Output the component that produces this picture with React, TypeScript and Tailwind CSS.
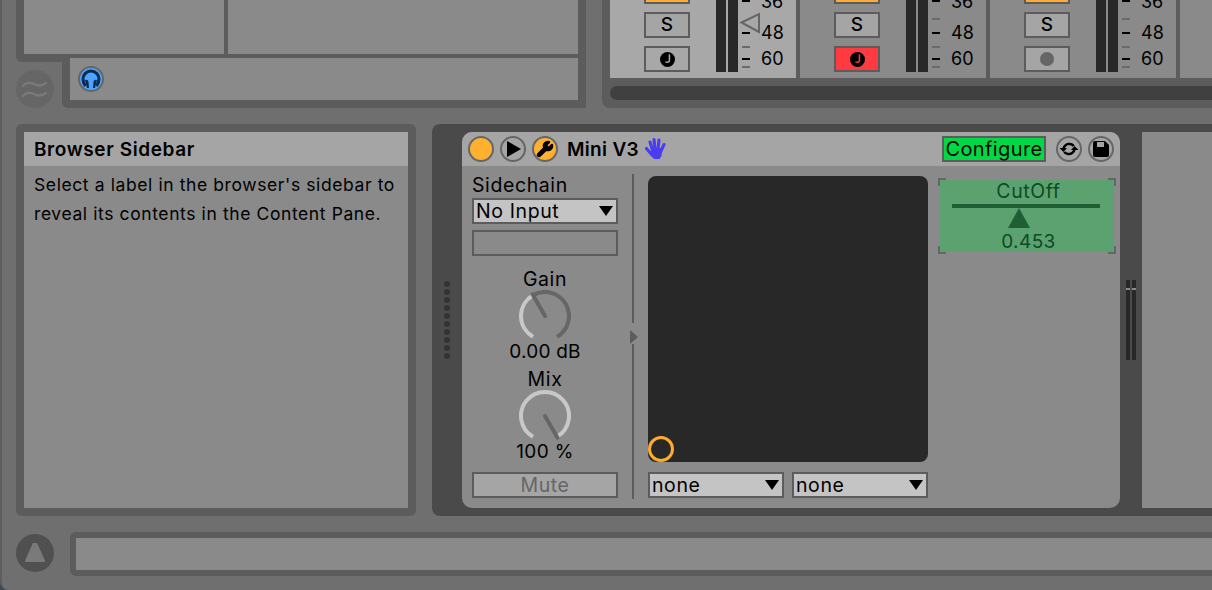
import React from 'react';
import { Wrench } from 'lucide-react';

const polar = (cx: number, cy: number, r: number, deg: number) => {
  const a = ((deg - 90) * Math.PI) / 180;
  return [cx + r * Math.cos(a), cy + r * Math.sin(a)];
};

const arc = (from: number, to: number) => {
  const [x1, y1] = polar(26, 26, 24, from);
  const [x2, y2] = polar(26, 26, 24, to);
  return `M${x1} ${y1} A24 24 0 ${to - from > 180 ? 1 : 0} 1 ${x2} ${y2}`;
};

const Knob: React.FC<{ angle: number }> = ({ angle }) => {
  const [px, py] = polar(26, 26, 25, angle);
  return (
    <svg width="52" height="52" viewBox="0 0 52 52" className="block">
      <path d={arc(angle, 150)} fill="none" stroke="#666666" strokeWidth="4" />
      <path d={arc(-150, angle)} fill="none" stroke="#c8c8c8" strokeWidth="4" />
      <line x1="26" y1="26" x2={px} y2={py} stroke="#666666" strokeWidth="4" strokeLinecap="round" />
    </svg>
  );
};

const DownTri = () => (
  <svg width="14" height="10" viewBox="0 0 14 10" className="block">
    <path d="M0 0H14L7 10Z" fill="#000" />
  </svg>
);

const Select: React.FC<{ label: string; width: string }> = ({ label, width }) => (
  <div className={`${width} h-[26px] border-2 border-[#5c5c5c] bg-[#c4c4c4] flex items-center justify-between pl-[2px] pr-[3px] text-[19.5px] tracking-[0.6px] leading-none text-black`}>
    <span className="pt-[2px]">{label}</span>
    <DownTri />
  </div>
);

const NoteGlyph: React.FC<{ cut: string }> = ({ cut }) => (
  <svg width="15" height="15" viewBox="0 0 14 14" className="block">
    <circle cx="7" cy="7" r="7" fill="#000" />
    <path d="M8.800 2V8.200C8.800 9.400 7 9.800 5 9.200" fill="none" stroke={cut} strokeWidth="1.400" />
  </svg>
);

const ToggleBox: React.FC<{ className: string; children: React.ReactNode }> = ({ className, children }) => (
  <div className={`w-[46px] h-[26px] border-2 border-[#5c5c5c] flex items-center justify-center ${className}`}>{children}</div>
);

const Tick: React.FC<{ gray?: boolean; className: string }> = ({ gray, className }) => (
  <div className={`w-[8px] h-[2px] ${gray ? 'bg-[#6a6a6a]' : 'bg-black'} ${className}`} />
);

const Channel: React.FC<{ bg: string; arm: React.ReactNode; hideTick?: boolean; children?: React.ReactNode }> = ({ bg, arm, hideTick, children }) => (
  <div className={`relative w-[186px] h-[78px] overflow-hidden flex shrink-0 pl-[34px] ${bg}`}>
    <div className="flex flex-col">
      <div className="w-[46px] h-[4px] bg-[#ffab2e] border-b-2 border-x-2 border-[#5c5c5c]" />
      <ToggleBox className="mt-[8px] bg-[#a5a5a5] text-[19px] font-medium text-black">S</ToggleBox>
      <div className="mt-[8px]">{arm}</div>
    </div>
    <div className="ml-[26px] flex gap-[2px] h-[72px]">
      <div className="w-[10px] bg-[#282828]" />
      <div className="w-[10px] bg-[#282828]" />
    </div>
    <div className="ml-[4px] flex flex-col">
      <Tick className="" />
      <Tick gray className={`mt-[16px] ${hideTick ? 'opacity-0' : ''}`} />
      <Tick className="mt-[12px]" />
      <Tick gray className="mt-[12px]" />
      <Tick className="mt-[10px]" />
      <Tick gray className="mt-[6px]" />
    </div>
    <div className="ml-[11px] flex flex-col text-[18px] leading-[26px] text-black">
      <span className="-mt-[11px]">36</span>
      <span className="mt-[5px]">48</span>
      <span>60</span>
    </div>
    {children}
  </div>
);

const RoundBtn: React.FC<{ className?: string; children?: React.ReactNode }> = ({ className, children }) => (
  <div className={`w-[26px] h-[26px] rounded-full border-2 border-[#666666] flex items-center justify-center shrink-0 ${className ?? ''}`}>{children}</div>
);

const Corner: React.FC<{ className: string }> = ({ className }) => (
  <div className={`absolute w-[8px] h-[8px] border-[#666666] ${className}`} />
);

export default function App() {
  return (
    <div className="w-[1212px] h-[590px] bg-[#3d4651] overflow-hidden [font-family:Inter,sans-serif]">
      <div className="w-full h-full bg-[#6f6f6f] border-l-2 border-[#5e5e5e] rounded-bl-[8px] pl-[14px] flex flex-col">
        {/* top: clip view + mixer */}
        <div className="flex gap-[16px] h-[108px] shrink-0">
          <div className="w-[570px] flex flex-col">
            <div className="h-[62px] shrink-0 bg-[#5c5c5c] rounded-bl-[6px] px-[8px] flex gap-[4px]">
              <div className="w-[200px] h-[54px] bg-[#8a8a8a]" />
              <div className="flex-1 h-[54px] bg-[#8a8a8a]" />
            </div>
            <div className="flex -mt-[4px]">
              <div className="w-[46px] pt-[12px] shrink-0">
                <div className="w-[38px] h-[38px] rounded-full bg-[#666666] flex items-center justify-center">
                  <svg width="28" height="22" viewBox="0 0 28 22" fill="none" stroke="#797979" strokeWidth="2.500" strokeLinecap="round">
                    <path d="M2 8c3-4 7-4 11-2s8 2 12-1" />
                    <path d="M2 18c3-4 7-4 11-2s8 2 12-1" />
                  </svg>
                </div>
              </div>
              <div className="flex-1 h-[50px] bg-[#5c5c5c] rounded-bl-[6px] pl-[8px] pr-[8px] pb-[8px]">
                <div className="h-[42px] bg-[#8a8a8a] pl-[8px] pt-[8px]">
                  <RoundBtn className="bg-[#4da3ff]">
                    <svg width="22" height="22" viewBox="0 0 22 22" fill="none">
                      <path d="M5.500 18C3.500 15.500 3 13.500 3 11a8 8 0 0 1 16 0c0 2.500-.5 4.500-2.500 7" stroke="#0d2a4d" strokeWidth="3" />
                      <path d="M5 12a2.500 2.500 0 0 1 3.500 2L9 20H7ZM17 12a2.500 2.500 0 0 0-3.500 2L13 20h2Z" fill="#0d2a4d" />
                    </svg>
                  </RoundBtn>
                </div>
              </div>
            </div>
          </div>

          <div className="flex-1 min-w-0 bg-[#5c5c5c] rounded-bl-[8px] pl-[8px]">
            <div className="flex gap-[4px] h-[78px]">
              <Channel
                bg="bg-[#a8a8a8]"
                hideTick
                arm={<ToggleBox className="bg-[#a8a8a8]"><NoteGlyph cut="#a8a8a8" /></ToggleBox>}
              >
                <svg width="24" height="24" viewBox="0 0 24 24" className="absolute left-[129px] top-[11px]">
                  <path d="M2.500 11.500L20 3V21Z" fill="none" stroke="#666666" strokeWidth="2" />
                </svg>
              </Channel>
              <Channel bg="bg-[#8a8a8a]" arm={<ToggleBox className="bg-[#ff3a40]"><NoteGlyph cut="#ff3a40" /></ToggleBox>} />
              <Channel
                bg="bg-[#8a8a8a]"
                arm={<ToggleBox className="bg-[#a5a5a5]"><div className="w-[14px] h-[14px] rounded-full bg-[#666666]" /></ToggleBox>}
              />
              <div className="flex-1 bg-[#8a8a8a]" />
            </div>
            <div className="mt-[8px] h-[14px] bg-[#404040] rounded-l-[7px]" />
          </div>
        </div>

        {/* info view + device chain */}
        <div className="flex gap-[16px] h-[392px] mt-[16px] shrink-0">
          <div className="w-[400px] bg-[#5c5c5c] rounded-[6px] p-[8px] flex flex-col shrink-0">
            <div className="h-[34px] bg-[#a5a5a5] pl-[10px] pt-[2px] flex items-center text-[19px] tracking-[0.6px] font-semibold text-black">Browser Sidebar</div>
            <div className="flex-1 bg-[#8a8a8a] pl-[10px] pt-[4px] text-[17.5px] tracking-[0.6px] leading-[29px] text-black">
              <div>Select a label in the browser's sidebar to</div>
              <div>reveal its contents in the Content Pane.</div>
            </div>
          </div>

          <div className="flex-1 min-w-0 bg-[#4a4a4a] rounded-l-[8px] py-[8px] pl-[12px] flex items-stretch">
            <div className="self-center flex flex-col gap-[2px] shrink-0">
              {Array.from({ length: 10 }).map((_, i) => (
                <div key={i} className="w-[6px] h-[6px] rounded-full bg-[#333333]" />
              ))}
            </div>
            <div className="ml-[12px] w-[658px] shrink-0 rounded-[10px] overflow-hidden bg-[#8a8a8a] flex flex-col">
              <div className="h-[34px] bg-[#a5a5a5] flex items-center pl-[6px] pr-[6px] shrink-0 text-black">
                <div className="flex gap-[6px]">
                  <RoundBtn className="bg-[#ffb02e]" />
                  <RoundBtn className="bg-[#a5a5a5]">
                    <svg width="14" height="16" viewBox="0 0 14 16" className="ml-[2px]"><path d="M0 0L14 8L0 16Z" fill="#000" /></svg>
                  </RoundBtn>
                  <RoundBtn className="bg-[#ffb02e]">
                    <Wrench size={18} fill="#000" stroke="#000" strokeWidth={2} />
                  </RoundBtn>
                </div>
                <span className="ml-[9px] pt-[2px] text-[19px] tracking-[0.3px] font-semibold">Mini V3</span>
                <svg width="24" height="24" viewBox="0 0 24 24" className="ml-[6px] shrink-0" fill="none" stroke="#4a3cf0" strokeWidth="3.100" strokeLinecap="round">
                  <path d="M5 5L7.500 13M9 2.500L10 12M14 3L13 12M19 7.500L16 14M1.500 11.500L7 18" />
                  <path d="M6 11H17.500L16.500 19L14.500 22H9L5.500 18Z" fill="#4a3cf0" stroke="none" />
                </svg>
                <div className="ml-auto w-[104px] h-[26px] border-2 border-[#5c5c5c] bg-[#00d944] flex items-center justify-center text-[20px] tracking-[0.4px] leading-none">Configure</div>
                <RoundBtn className="ml-[10px] bg-[#a5a5a5]">
                  <svg width="20" height="20" viewBox="0 0 20 20" fill="none" stroke="#000" strokeWidth="2.400">
                    <path d="M4.500 9.500C5 6.500 8 4.500 11 5c2 .3 3 1 3.800 2" />
                    <path d="M15.500 10.500C15 13.500 12 15.500 9 15c-2-.3-3-1-3.800-2" />
                    <path d="M0.500 9H8L4.500 13Z" fill="#000" stroke="none" />
                    <path d="M19.500 11H12L15.500 7Z" fill="#000" stroke="none" />
                  </svg>
                </RoundBtn>
                <RoundBtn className="ml-[6px] bg-[#a5a5a5]">
                  <svg width="16" height="16" viewBox="0 0 16 16">
                    <path d="M2 0H12L16 4V14a2 2 0 0 1-2 2H2a2 2 0 0 1-2-2V2a2 2 0 0 1 2-2Z" fill="#000" />
                    <rect x="4" y="1" width="7" height="5" fill="#a5a5a5" />
                  </svg>
                </RoundBtn>
              </div>

              <div className="flex-1 flex min-h-0 text-black text-[19.5px] tracking-[0.6px]">
                <div className="ml-[10px] w-[146px] pt-[8px] flex flex-col shrink-0">
                  <div className="leading-[22px] pb-[2px]">Sidechain</div>
                  <Select label="No Input" width="w-[146px]" />
                  <div className="mt-[6px] h-[26px] border-2 border-[#5c5c5c]" />
                  <div className="mt-[12px] leading-[22px] text-center">Gain</div>
                  <div className="flex justify-center"><Knob angle={-30} /></div>
                  <div className="-mt-[2px] leading-[20px] pt-[2px] text-center text-[19px] tracking-[0.2px]">0.00 dB</div>
                  <div className="mt-[6px] leading-[22px] text-center">Mix</div>
                  <div className="flex justify-center"><Knob angle={150} /></div>
                  <div className="-mt-[2px] leading-[20px] pt-[2px] text-center text-[19px] tracking-[0.4px]">100 %</div>
                  <div className="mt-[10px] pt-[2px] h-[26px] border-2 border-[#5c5c5c] bg-[#a5a5a5] text-[#666666] flex items-center justify-center">Mute</div>
                </div>

                <div className="ml-[12px] w-[8px] pt-[8px] flex flex-col shrink-0">
                  <div className="ml-[2px] w-[2px] h-[149px] bg-[#5c5c5c]" />
                  <svg width="8" height="14" viewBox="0 0 8 14" className="mt-[7px] block"><path d="M0 0L8 7L0 14Z" fill="#5c5c5c" /></svg>
                  <div className="ml-[2px] w-[2px] h-[155px] bg-[#5c5c5c]" />
                </div>

                <div className="ml-[10px] w-[280px] pt-[10px] flex flex-col shrink-0">
                  <div className="relative h-[286px] bg-[#282828] rounded-[8px]">
                    <div className="absolute left-0 bottom-0 w-[26px] h-[26px] rounded-full border-[3px] border-[#ffab2e]" />
                  </div>
                  <div className="mt-[10px] flex gap-[8px]">
                    <Select label="none" width="w-[136px]" />
                    <Select label="none" width="w-[136px]" />
                  </div>
                </div>

                <div className="ml-[10px] w-[178px] pt-[12px] shrink-0">
                  <div className="relative h-[76px] p-[2px]">
                    <Corner className="left-0 top-0 border-l-2 border-t-2" />
                    <Corner className="right-0 top-0 border-r-2 border-t-2" />
                    <Corner className="left-0 bottom-0 border-l-2 border-b-2" />
                    <Corner className="right-0 bottom-0 border-r-2 border-b-2" />
                    <div className="relative h-[72px] bg-[#5ca271] flex flex-col items-center text-[#0f4a24]">
                      <div className="leading-[22px] pl-[3px]">CutOff</div>
                      <div className="mt-[2px] -ml-[2px] w-[148px] h-[4px] bg-[#1f5f33]" />
                      <svg width="22" height="20" viewBox="0 0 22 20" className="block -ml-[16px]"><path d="M11 0L22 20H0Z" fill="#1f5f33" /></svg>
                      <div className="mt-[2px] leading-[20px] pt-[2px] pl-[3px] text-[19px] tracking-[0.4px]">0.453</div>
                    </div>
                  </div>
                </div>
              </div>
            </div>
            <div className="ml-[6px] self-center flex gap-[2px] shrink-0">
              <div className="relative w-[4px] h-[80px] bg-[#282828]"><div className="absolute left-0 top-[8px] w-full h-[2px] bg-[#8a8a8a]" /></div>
              <div className="relative w-[4px] h-[80px] bg-[#282828]"><div className="absolute left-0 top-[8px] w-full h-[2px] bg-[#8a8a8a]" /></div>
            </div>
            <div className="ml-[6px] flex-1 bg-[#8a8a8a]" />
          </div>
        </div>

        {/* status bar */}
        <div className="flex h-[44px] mt-[16px] shrink-0">
          <div className="w-[54px] shrink-0 pt-[2px]">
            <div className="w-[38px] h-[38px] rounded-full bg-[#505050] flex items-center justify-center">
              <svg width="24" height="24" viewBox="0 0 24 24"><path d="M10.500 3H13.500L21 20H3Z" fill="#7a7a7a" stroke="#7a7a7a" strokeWidth="2" strokeLinejoin="round" /></svg>
            </div>
          </div>
          <div className="flex-1 bg-[#5c5c5c] rounded-l-[6px] py-[6px] pl-[6px]">
            <div className="h-[32px] bg-[#8a8a8a]" />
          </div>
        </div>
      </div>
    </div>
  );
}
